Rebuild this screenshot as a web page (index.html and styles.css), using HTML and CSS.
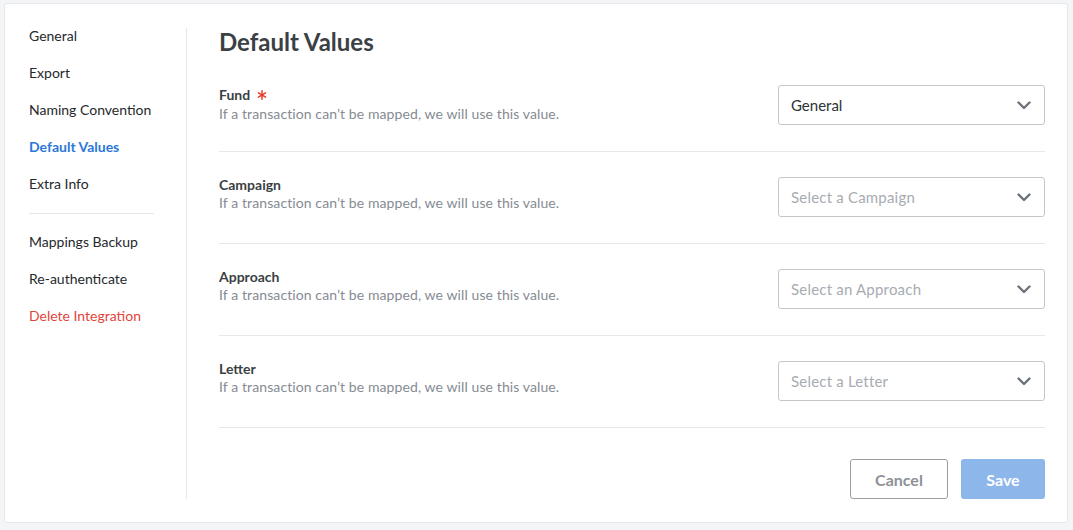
FILE: index.html
```html
<!DOCTYPE html>
<html>
<head>
<meta charset="utf-8">
<link rel="stylesheet" href="styles.css">
</head>
<body>
<div class="card">
  <nav class="sidebar">
    <a class="nav-item">General</a>
    <a class="nav-item">Export</a>
    <a class="nav-item">Naming Convention</a>
    <a class="nav-item active">Default Values</a>
    <a class="nav-item">Extra Info</a>
    <div class="nav-sep"></div>
    <a class="nav-item">Mappings Backup</a>
    <a class="nav-item">Re-authenticate</a>
    <a class="nav-item danger">Delete Integration</a>
  </nav>
  <main class="main">
    <h1 class="title">Default Values</h1>
    <div class="row">
      <div class="info">
        <div class="label required">Fund <svg class="req" viewBox="0 0 10 10" width="10" height="10"><g stroke="currentColor" stroke-width="1.5" stroke-linecap="round"><line x1="5" y1="0.8" x2="5" y2="9.2"/><line x1="1.4" y1="2.9" x2="8.6" y2="7.1"/><line x1="1.4" y1="7.1" x2="8.6" y2="2.9"/></g></svg></div>
        <div class="desc">If a transaction can’t be mapped, we will use this value.</div>
      </div>
      <div class="select">
        <span class="value">General</span>
        <svg class="chev" viewBox="0 0 14 9" width="14" height="9"><path d="M1.5 1.5 L7 7 L12.5 1.5" fill="none" stroke="currentColor" stroke-width="2.4" stroke-linecap="round" stroke-linejoin="round"/></svg>
      </div>
    </div>
    <div class="row">
      <div class="info">
        <div class="label">Campaign</div>
        <div class="desc">If a transaction can’t be mapped, we will use this value.</div>
      </div>
      <div class="select">
        <span class="placeholder">Select a Campaign</span>
        <svg class="chev" viewBox="0 0 14 9" width="14" height="9"><path d="M1.5 1.5 L7 7 L12.5 1.5" fill="none" stroke="currentColor" stroke-width="2.4" stroke-linecap="round" stroke-linejoin="round"/></svg>
      </div>
    </div>
    <div class="row">
      <div class="info">
        <div class="label">Approach</div>
        <div class="desc">If a transaction can’t be mapped, we will use this value.</div>
      </div>
      <div class="select">
        <span class="placeholder">Select an Approach</span>
        <svg class="chev" viewBox="0 0 14 9" width="14" height="9"><path d="M1.5 1.5 L7 7 L12.5 1.5" fill="none" stroke="currentColor" stroke-width="2.4" stroke-linecap="round" stroke-linejoin="round"/></svg>
      </div>
    </div>
    <div class="row">
      <div class="info">
        <div class="label">Letter</div>
        <div class="desc">If a transaction can’t be mapped, we will use this value.</div>
      </div>
      <div class="select">
        <span class="placeholder">Select a Letter</span>
        <svg class="chev" viewBox="0 0 14 9" width="14" height="9"><path d="M1.5 1.5 L7 7 L12.5 1.5" fill="none" stroke="currentColor" stroke-width="2.4" stroke-linecap="round" stroke-linejoin="round"/></svg>
      </div>
    </div>
    <div class="actions">
      <button class="btn cancel">Cancel</button>
      <button class="btn save">Save</button>
    </div>
  </main>
</div>
</body>
</html>
```
FILE: styles.css
```css
html, body {
  margin: 0;
  padding: 0;
  background: #f4f5f7;
  font-family: Lato, "Liberation Sans", sans-serif;
}
body {
  padding: 3px 5px 7px 4px;
  box-sizing: border-box;
  height: 530px;
}
.card {
  background: #fff;
  border: 1px solid #e6e8eb;
  border-radius: 3px;
  display: flex;
  padding: 24px 22px 23px 0;
  height: 520px;
  box-sizing: border-box;
}
.sidebar {
  width: 125px;
  padding: 0 32px 0 24px;
  border-right: 1px solid #e4e6e9;
  display: flex;
  flex-direction: column;
  gap: 21px;
}
.nav-item {
  font-size: 14px;
  line-height: 16px;
  color: #25292d;
  white-space: nowrap;
}
.nav-item.active {
  color: #2b78d8;
  font-weight: 700;
}
.nav-item.danger {
  color: #e2453c;
}
.nav-sep {
  height: 1px;
  background: #e4e6e9;
  margin: 0 0 -1px;
}
.main {
  flex: 1;
  padding-left: 32px;
  display: flex;
  flex-direction: column;
}
.title {
  margin: 0 0 4px;
  font-size: 24px;
  line-height: 28px;
  font-weight: 700;
  color: #3b4045;
}
.row {
  display: flex;
  align-items: flex-start;
  justify-content: space-between;
  padding: 25px 0 26px;
  border-bottom: 1px solid #e6e8eb;
}
.label {
  font-size: 14px;
  line-height: 16px;
  font-weight: 700;
  color: #3a3f44;
  display: flex;
  align-items: center;
}
.label.required {
  height: 18px;
  margin-top: 1px;
}
.req {
  color: #e53b2c;
  margin-left: 7px;
  display: block;
}
.desc {
  margin-top: 2px;
  font-size: 14px;
  line-height: 16px;
  letter-spacing: 0.1px;
  color: #858b92;
}
.select {
  width: 267px;
  height: 40px;
  box-sizing: border-box;
  border: 1px solid #c2c7cc;
  border-radius: 3px;
  display: flex;
  align-items: center;
  justify-content: space-between;
  padding: 0 13px 0 12px;
  font-size: 15px;
}
.value { color: #2d3236; }
.placeholder { color: #a7acb2; letter-spacing: 0.2px; }
.chev { color: #6b7178; display: block; }
.actions {
  margin-top: auto;
  display: flex;
  justify-content: flex-end;
  gap: 13px;
}
.btn {
  height: 40px;
  border-radius: 3px;
  font-family: inherit;
  font-size: 16px;
  font-weight: 700;
  box-sizing: border-box;
}
.cancel {
  width: 98px;
  background: #fff;
  border: 1px solid #9a9ea4;
  color: #8e9297;
}
.save {
  width: 84px;
  background: #8db6ea;
  border: none;
  color: #fff;
}
```
